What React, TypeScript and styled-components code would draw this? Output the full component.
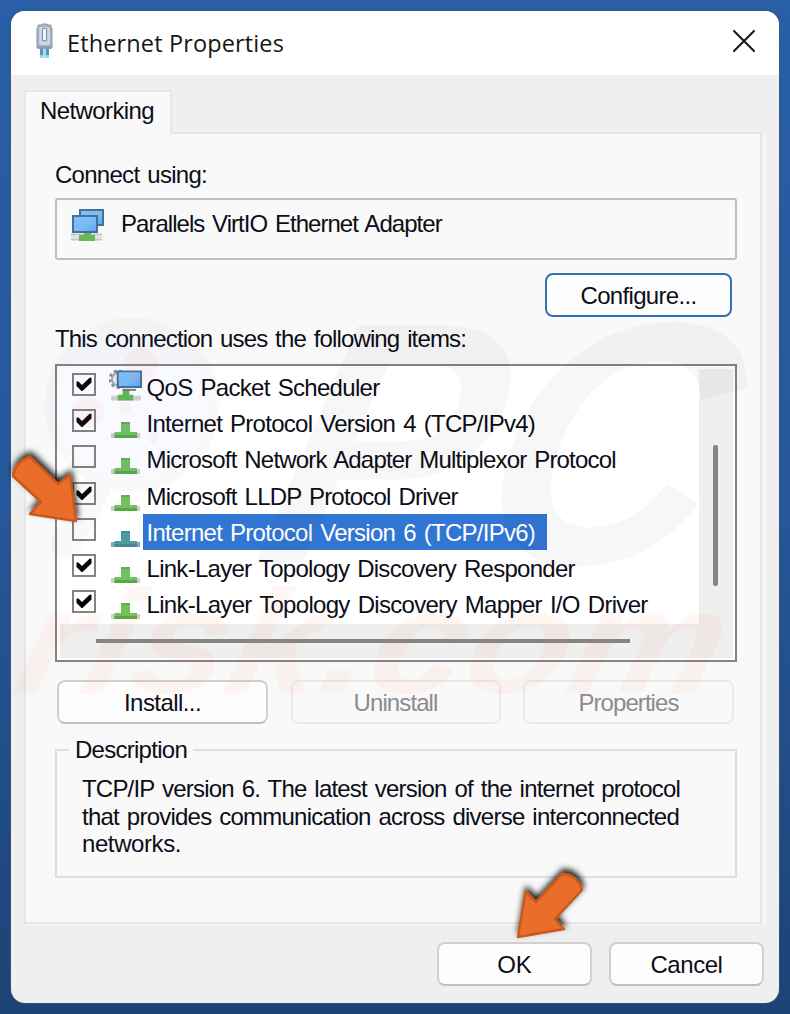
import React from "react";
import styled, { createGlobalStyle } from "styled-components";

const GlobalStyle = createGlobalStyle`
  *, *::before, *::after { box-sizing: border-box; }
  html, body { margin: 0; padding: 0; }
  body { overflow: hidden; }
`;

const Desktop = styled.div`
  position: relative;
  width: 790px;
  height: 1014px;
  padding: 11px;
  background: linear-gradient(180deg, #285fa7 0%, #26579a 50%, #1d4376 100%);
  font-family: "Liberation Sans", Arial, sans-serif;
  font-size: 24px;
  line-height: 28px;
  color: #0d0d18;
`;

const Window = styled.div`
  display: flex;
  flex-direction: column;
  width: 768px;
  height: 992px;
  border-radius: 14px;
  background: #efefef;
  overflow: hidden;
  box-shadow: 0 0 1px 1px rgba(70, 85, 105, 0.65);
`;

const TitleBar = styled.header`
  display: flex;
  align-items: center;
  height: 64px;
  flex: none;
  padding: 0 24px 4px 22px;
  background: #fff;
`;

const Title = styled.h1`
  flex: 1;
  margin: 4px 0 0 11px;
  font: 400 23.5px/32px "Open Sans", "Noto Sans", sans-serif;
  letter-spacing: 0.13px;
  color: #161616;
`;

const CloseButton = styled.button`
  display: flex;
  padding: 0;
  border: 0;
  background: none;
`;

const Line = styled.span<{ $track?: number }>`
  display: block;
  white-space: nowrap;
  letter-spacing: ${(p) => p.$track ?? -0.75}px;
  word-spacing: 2px;
`;

const Body = styled.main`
  display: flex;
  flex-direction: column;
  flex: 1;
  padding: 15px 15px 17px 13px;
`;

const Tab = styled.div`
  z-index: 1;
  width: 148px;
  height: 44px;
  margin-bottom: -2px;
  padding: 5px 0 0 14px;
  border: 2px solid #e6e6e6;
  border-bottom: 0;
  background: #f9f9f9;
`;

const Panel = styled.section`
  display: flex;
  flex-direction: column;
  width: 738px;
  height: 792px;
  padding: 27px 24px 0 29px;
  border: 2px solid #e6e6e6;
  background: #f9f9f9;
  box-shadow: 4px 2px 0 #f4f4f4;
`;

const AdapterBox = styled.div`
  display: flex;
  align-items: flex-start;
  gap: 16px;
  width: 682px;
  height: 62px;
  margin-top: 9px;
  padding: 8px 0 0 13px;
  border: 2px solid #bfbfbf;
  border-radius: 3px;
  & > span { margin-top: 2px; }
`;

const Button = styled.button<{ $width: number; $kind?: "focus" | "off" }>`
  display: flex;
  align-items: center;
  justify-content: center;
  width: ${(p) => p.$width}px;
  height: 44px;
  padding: 1px 0 0;
  border: 2px solid ${(p) => (p.$kind === "focus" ? "#3470b4" : p.$kind === "off" ? "#e9e9e9" : "#d0d0d0")};
  border-bottom-color: ${(p) => (p.$kind === "focus" ? "#3470b4" : p.$kind === "off" ? "#e9e9e9" : "#bfbfbf")};
  border-radius: 8px;
  background: ${(p) => (p.$kind === "off" ? "#f9f9f9" : "#fdfdfd")};
  color: ${(p) => (p.$kind === "off" ? "#8b8b90" : "#0d0d18")};
  font: inherit;
`;

const ConfigureRow = styled.div`
  display: flex;
  justify-content: flex-end;
  margin: 13px 4px 8px 0;
`;

const ListFrame = styled.div`
  display: grid;
  grid-template: 255px 34px / 639px 34px;
  width: 682px;
  height: 298px;
  margin-top: 11px;
  padding: 3px;
  border: 2px solid #83838b;
  background: #fff;
`;

const Items = styled.ul`
  margin: 0;
  padding: 0 0 0 12px;
  list-style: none;
`;

const Item = styled.li`
  display: flex;
  height: 36.2px;
`;

const CheckBox = styled.span`
  display: flex;
  align-items: center;
  justify-content: center;
  width: 24px;
  height: 23px;
  margin-top: 4px;
  border: 2px solid #838383;
  background: #fff;
`;

const IconSlot = styled.span`
  display: flex;
  align-items: flex-end;
  width: 34px;
  height: 34px;
  margin-left: 13px;
`;

const Caption = styled.span<{ $selected?: boolean }>`
  height: 36px;
  padding: ${(p) => (p.$selected ? "5px 12px 0 3.5px" : "5px 0 0 3.5px")};
  background: ${(p) => (p.$selected ? "#3276d4" : "transparent")};
  color: ${(p) => (p.$selected ? "#fff" : "inherit")};
`;

const VerticalTrack = styled.div`
  padding: 76px 0 0 14px;
  background: #efefef;
`;

const VerticalThumb = styled.div`
  width: 5px;
  height: 141px;
  border-radius: 2px;
  background: #858585;
`;

const HorizontalTrack = styled.div`
  grid-column: 1 / 3;
  padding: 15px 0 0 36px;
  background: #efefef;
`;

const HorizontalThumb = styled.div`
  width: 534px;
  height: 4px;
  background: #858583;
`;

const Actions = styled.div`
  display: flex;
  justify-content: space-between;
  width: 677px;
  margin: 18px 0 0 2px;
`;

const Description = styled.fieldset`
  width: 682px;
  height: 142px;
  margin: 12px 0 0;
  padding: 11px 0 0 25px;
  border: 2px solid #dedede;
  line-height: 27.8px;
`;

const Legend = styled.legend`
  margin-left: -13px;
  padding: 0 6px;
`;

const Footer = styled.footer`
  display: flex;
  justify-content: flex-end;
  gap: 17px;
  margin-top: 18px;
`;

const Overlay = styled.svg`
  position: absolute;
  inset: 0;
  pointer-events: none;
`;

const PlugIcon = () => (
  <svg width="23" height="36" viewBox="0 0 23 36">
    <path d="M5 2h3l1-1h5l1 1h3v3h1v20H4V5h1z" fill="#aab3c6" stroke="#8c96a8" />
    <path d="M7 5h9v16H7z" fill="#c5cddb" stroke="#e6ebf2" />
    <path d="M9.500 5.500h4v12h-4z" fill="#eff3f7" stroke="#8793a7" />
    <path d="M5 23h13v3H5z" fill="#8c9fb8" />
    <path d="M7 26h3.500v7.500H7zM12.500 26h3.500v7.500h-3.500z" fill="#4c9abd" />
    <path d="M10.500 26h2v9h-2z" fill="#b9e0ee" />
    <path d="M7 32h3v3H7zM13 32h3v3h-3z" fill="#9fd2e6" />
  </svg>
);

const Screens = () => (
  <svg width="35" height="34" viewBox="0 0 35 34">
    <defs>
      <linearGradient id="screen" x1="0" y1="0" x2="1" y2="1">
        <stop offset="0" stopColor="#7fc2fa" /><stop offset=".55" stopColor="#79bdf8" /><stop offset="1" stopColor="#57a6ee" />
      </linearGradient>
    </defs>
    <path d="M10 2h23v15H10z" fill="url(#screen)" stroke="#466f9a" strokeWidth="2" />
    <path d="M1 26.500h31M1 31.500h31" stroke="#c6c6c6" strokeWidth="2" />
    <path d="M1 29h31" stroke="#e2e2e2" strokeWidth="3" />
    <path d="M14 24h7v3h4v6H9v-6h5z" fill="#69b65a" />
    <path d="M3 8h24v16H3z" fill="url(#screen)" stroke="#466f9a" strokeWidth="2" />
  </svg>
);

const ProtocolIcon = ({ selected }: { selected?: boolean }) => (
  <svg width="32" height="18" viewBox="0 0 32 18">
    <path d="M2 12h29v5H2z" fill={selected ? "#7da4d2" : "#cfcfcf"} />
    <path d="M12 1h9v10h7v6H5.500V11H12z" fill={selected ? "#4d9d9d" : "#72c15f"} />
    <path d="M5.500 14h22.500v3H5.500z" fill={selected ? "#438b91" : "#59a648"} />
    <path d="M12 1h9v2h-9z" fill={selected ? "#4588ab" : "#67a858"} />
  </svg>
);

const SchedulerIcon = () => (
  <svg width="35" height="36" viewBox="0 0 35 36">
    <circle cx="9.500" cy="12" r="8" fill="none" stroke="#8b8e92" strokeWidth="4" strokeDasharray="3 2.500" />
    <circle cx="9.500" cy="12" r="6.500" fill="#eceef1" stroke="#a5a8ab" strokeWidth="2" />
    <path d="M2 29h31v5H2z" fill="#d3d3d3" />
    <path d="M14 22h7v6h4v6H9v-6h5z" fill="#64b653" />
    <path d="M14 23h14" stroke="#737b83" strokeWidth="2" />
    <path d="M9 4h24v16H9z" fill="url(#screen)" stroke="#466f9a" strokeWidth="2" />
  </svg>
);

const Tick = () => (
  <svg width="16" height="15" viewBox="0 0 16 15">
    <path d="M.5 4.500l2 0 3.500 3.500L13.500 .8h2v4.700L6.500 14h-1L.5 9z" fill="#050505" />
  </svg>
);

type Entry = { name: string; track: number; checked?: boolean; selected?: boolean; scheduler?: boolean };

const entries: Entry[] = [
  { name: "QoS Packet Scheduler", track: -0.69, checked: true, scheduler: true },
  { name: "Internet Protocol Version 4 (TCP/IPv4)", track: -0.725, checked: true },
  { name: "Microsoft Network Adapter Multiplexor Protocol", track: -0.818 },
  { name: "Microsoft LLDP Protocol Driver", track: -0.79, checked: true },
  { name: "Internet Protocol Version 6 (TCP/IPv6)", track: -0.725, selected: true },
  { name: "Link-Layer Topology Discovery Responder", track: -0.72, checked: true },
  { name: "Link-Layer Topology Discovery Mapper I/O Driver", track: -0.695, checked: true },
];

export default function App() {
  return (
    <Desktop>
      <GlobalStyle />
      <Window>
        <TitleBar>
          <PlugIcon />
          <Title>Ethernet Properties</Title>
          <CloseButton aria-label="Close">
            <svg width="22" height="22" viewBox="0 0 22 22">
              <path d="M1 1l20 20M21 1L1 21" stroke="#161616" strokeWidth="2" strokeLinecap="round" />
            </svg>
          </CloseButton>
        </TitleBar>
        <Body>
          <Tab><Line $track={-0.605}>Networking</Line></Tab>
          <Panel>
            <Line $track={-0.722}>Connect using:</Line>
            <AdapterBox>
              <Screens />
              <Line $track={-0.962}>Parallels VirtIO Ethernet Adapter</Line>
            </AdapterBox>
            <ConfigureRow>
              <Button $width={187} $kind="focus"><Line $track={-0.672}>Configure...</Line></Button>
            </ConfigureRow>
            <Line $track={-0.859}>This connection uses the following items:</Line>
            <ListFrame>
              <Items>
                {entries.map((e) => (
                  <Item key={e.name}>
                    <CheckBox>{e.checked && <Tick />}</CheckBox>
                    <IconSlot>{e.scheduler ? <SchedulerIcon /> : <ProtocolIcon selected={e.selected} />}</IconSlot>
                    <Caption $selected={e.selected}><Line $track={e.track}>{e.name}</Line></Caption>
                  </Item>
                ))}
              </Items>
              <VerticalTrack><VerticalThumb /></VerticalTrack>
              <HorizontalTrack><HorizontalThumb /></HorizontalTrack>
            </ListFrame>
            <Actions>
              <Button $width={211}><Line $track={-0.57}>Install...</Line></Button>
              <Button $width={210} $kind="off"><Line $track={-0.893}>Uninstall</Line></Button>
              <Button $width={211} $kind="off"><Line $track={-0.938}>Properties</Line></Button>
            </Actions>
            <Description>
              <Legend><Line $track={-0.732}>Description</Line></Legend>
              <Line $track={-0.797}>TCP/IP version 6. The latest version of the internet protocol</Line>
              <Line $track={-0.772}>that provides communication across diverse interconnected</Line>
              <Line $track={-0.411}>networks.</Line>
            </Description>
          </Panel>
          <Footer>
            <Button $width={155}><Line $track={0}>OK</Line></Button>
            <Button $width={155}><Line $track={-0.451}>Cancel</Line></Button>
          </Footer>
        </Body>
      </Window>

      <Overlay width="790" height="1014" viewBox="0 0 790 1014">
        <defs>
          <filter id="shade" x="-30%" y="-30%" width="160%" height="160%">
            <feDropShadow dx="1" dy="-4" stdDeviation="3" floodColor="#000" floodOpacity="0.9" />
          </filter>
        </defs>
        <g fontFamily="Liberation Sans" fontWeight="700" fontStyle="italic">
          <g opacity="0.035">
            <circle cx="132" cy="405" r="80" fill="#3f6df0" stroke="#40506a" strokeWidth="15" />
            <path d="M96 487L66 544" stroke="#40506a" strokeWidth="30" strokeLinecap="round" />
            <text transform="translate(250 563) skewX(-14)" fontSize="345" textLength="450" lengthAdjust="spacingAndGlyphs">PC</text>
          </g>
          <g fill="#f0703a" opacity="0.055">
            <circle cx="141" cy="365" r="17" /><circle cx="88" cy="412" r="16" />
            <circle cx="125" cy="408" r="6" /><circle cx="153" cy="437" r="6" />
            <text transform="translate(10 693) skewX(-14)" fontSize="148" textLength="704" lengthAdjust="spacingAndGlyphs">risk.com</text>
          </g>
        </g>
        <g fill="#ea6e2b" stroke="#c9591c" strokeWidth="2.5" strokeLinejoin="round">
          <path filter="url(#shade)" d="M76 521L30 514 41 502 13 476Q15 462 30 457L58 484 70 475Z" />
          <path filter="url(#shade)" d="M518 937L525.500 891.500 536 902 562 874Q577 874 582 890L555 919 564 929Z" />
        </g>
      </Overlay>
    </Desktop>
  );
}
